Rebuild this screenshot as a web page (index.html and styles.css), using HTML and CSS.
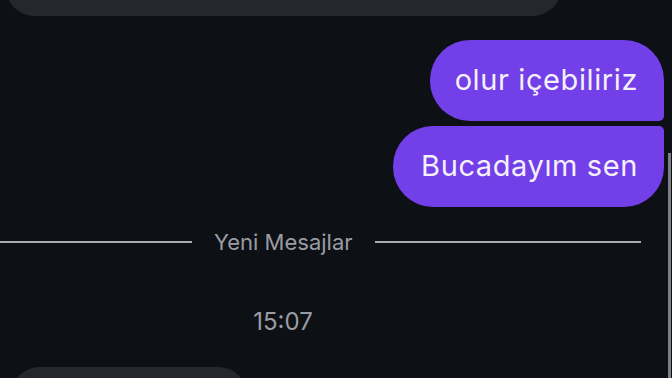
FILE: index.html
```html
<!DOCTYPE html>
<html lang="tr">
<head>
    <meta charset="UTF-8">
    <meta name="viewport" content="width=device-width, initial-scale=1.0">
    <title>Sohbet</title>
    <link rel="stylesheet" href="styles.css">
</head>
<body>
    <section class="chat">
        <div class="bubble in top-bubble"></div>

        <div class="outgoing">
            <div class="bubble out first">olur içebiliriz</div>
            <div class="bubble out last">Bucadayım sen</div>
        </div>

        <div class="divider">
            <span class="line left"></span>
            <span class="divider-text">Yeni Mesajlar</span>
            <span class="line right"></span>
        </div>

        <div class="time">15:07</div>

        <div class="bubble in bottom-bubble"></div>

        <div class="scrollbar"></div>
    </section>
</body>
</html>
```

FILE: styles.css
```css
body {
    margin: 0;
    background-color: #0d1015;
    font-family: Inter, "Noto Sans", sans-serif;
    overflow: hidden;
}

.chat {
    position: relative;
    height: 378px;
    display: flex;
    flex-direction: column;
    overflow: hidden;
}

.chat > * {
    flex-shrink: 0;
}

.bubble.in {
    background-color: #25272c;
    border-radius: 34px;
}

.top-bubble {
    width: 557px;
    height: 60px;
    margin: -44px 0 0 5px;
}

.outgoing {
    display: flex;
    flex-direction: column;
    align-items: flex-end;
    gap: 5px;
    margin: 24px 8px 0 0;
}

.bubble.out {
    height: 81px;
    box-sizing: border-box;
    display: flex;
    align-items: center;
    padding: 0 26px 2px 25px;
    background-color: #723fe8;
    color: #f4f1fb;
    font-size: 29px;
    letter-spacing: 0.6px;
}

.bubble.out.first {
    border-radius: 40px 40px 5px 40px;
}

.bubble.out.last {
    border-radius: 40px 5px 40px 40px;
    padding-left: 28px;
}

.divider {
    display: flex;
    align-items: center;
    margin-top: 23px;
    height: 24px;
}

.line {
    height: 2px;
    background-color: #a9abb1;
}

.line.left {
    width: 192px;
}

.line.right {
    width: 266px;
}

.divider-text {
    margin: 0 22px;
    color: #9a9ca3;
    font-size: 22px;
}

.time {
    width: 566px;
    text-align: center;
    margin-top: 53px;
    color: #9a9ca3;
    font-size: 24px;
}

.bottom-bubble {
    width: 238px;
    height: 60px;
    margin: 31px 0 0 10px;
}

.scrollbar {
    position: absolute;
    right: 1px;
    top: 153px;
    bottom: 0;
    width: 3px;
    background-color: #7d7f84;
}
```
